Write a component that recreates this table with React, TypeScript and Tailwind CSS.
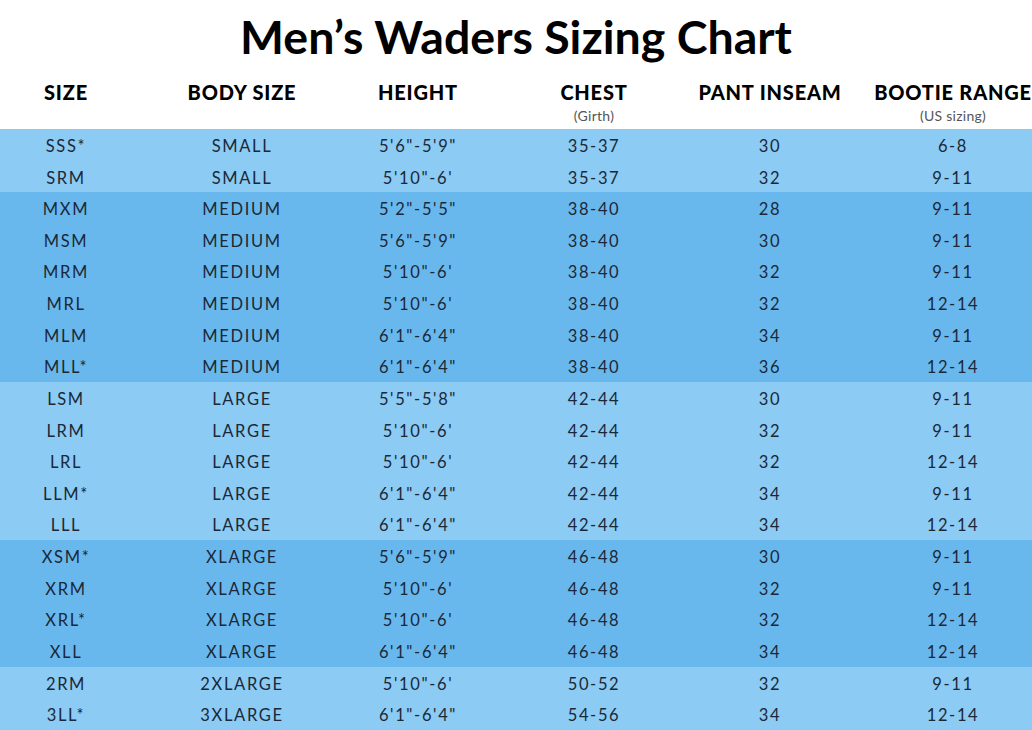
const rows: { group: number; cells: string[] }[] = [
  { group: 0, cells: ["SSS*", "SMALL", `5'6"-5'9"`, "35-37", "30", "6-8"] },
  { group: 0, cells: ["SRM", "SMALL", `5'10"-6'`, "35-37", "32", "9-11"] },
  { group: 1, cells: ["MXM", "MEDIUM", `5'2"-5'5"`, "38-40", "28", "9-11"] },
  { group: 1, cells: ["MSM", "MEDIUM", `5'6"-5'9"`, "38-40", "30", "9-11"] },
  { group: 1, cells: ["MRM", "MEDIUM", `5'10"-6'`, "38-40", "32", "9-11"] },
  { group: 1, cells: ["MRL", "MEDIUM", `5'10"-6'`, "38-40", "32", "12-14"] },
  { group: 1, cells: ["MLM", "MEDIUM", `6'1"-6'4"`, "38-40", "34", "9-11"] },
  { group: 1, cells: ["MLL*", "MEDIUM", `6'1"-6'4"`, "38-40", "36", "12-14"] },
  { group: 0, cells: ["LSM", "LARGE", `5'5"-5'8"`, "42-44", "30", "9-11"] },
  { group: 0, cells: ["LRM", "LARGE", `5'10"-6'`, "42-44", "32", "9-11"] },
  { group: 0, cells: ["LRL", "LARGE", `5'10"-6'`, "42-44", "32", "12-14"] },
  { group: 0, cells: ["LLM*", "LARGE", `6'1"-6'4"`, "42-44", "34", "9-11"] },
  { group: 0, cells: ["LLL", "LARGE", `6'1"-6'4"`, "42-44", "34", "12-14"] },
  { group: 1, cells: ["XSM*", "XLARGE", `5'6"-5'9"`, "46-48", "30", "9-11"] },
  { group: 1, cells: ["XRM", "XLARGE", `5'10"-6'`, "46-48", "32", "9-11"] },
  { group: 1, cells: ["XRL*", "XLARGE", `5'10"-6'`, "46-48", "32", "12-14"] },
  { group: 1, cells: ["XLL", "XLARGE", `6'1"-6'4"`, "46-48", "34", "12-14"] },
  { group: 0, cells: ["2RM", "2XLARGE", `5'10"-6'`, "50-52", "32", "9-11"] },
  { group: 0, cells: ["3LL*", "3XLARGE", `6'1"-6'4"`, "54-56", "34", "12-14"] },
];

const headers: { label: string; sub?: string }[] = [
  { label: "SIZE" },
  { label: "BODY SIZE" },
  { label: "HEIGHT" },
  { label: "CHEST", sub: "(Girth)" },
  { label: "PANT INSEAM" },
  { label: "BOOTIE RANGE", sub: "(US sizing)" },
];

const cols = "grid grid-cols-[132px_220px_132px_220px_132px_1fr]";

export default function App() {
  return (
    <div className="w-[1032px] h-[730px] overflow-hidden bg-white font-['Lato','Liberation_Sans',sans-serif]">
      <h1 className="h-[72px] pt-[7px] text-center text-[46.5px] leading-[58px] font-bold text-black">
        Men’s Waders Sizing Chart
      </h1>

      {/* Column headings */}
      <div className={`${cols} h-[57px]`}>
        {headers.map((h, i) => (
          <div key={h.label} className={`flex flex-col items-center pt-[8px] ${i === 5 ? "pl-[38px]" : ""}`}>
            <span className="text-[20px] leading-[24px] font-black tracking-[0.04em] text-black whitespace-nowrap">
              {h.label}
            </span>
            {h.sub && (
              <span className="mt-[3px] text-[14px] leading-[18px] tracking-[0.02em] text-[#555]">{h.sub}</span>
            )}
          </div>
        ))}
      </div>

      {/* Rows */}
      <div>
        {rows.map((r) => (
          <div
            key={r.cells[0]}
            className={`${cols} h-[31.63px] items-center ${r.group === 0 ? "bg-[#8ccbf3]" : "bg-[#69b8ed]"}`}
          >
            {r.cells.map((c, i) => (
              <div
                key={i}
                className={`pt-[3px] text-center text-[16.5px] tracking-[0.1em] text-[#1b2838] whitespace-nowrap ${i === 5 ? "pl-[38px]" : ""}`}
              >
                {c}
              </div>
            ))}
          </div>
        ))}
      </div>
    </div>
  );
}
